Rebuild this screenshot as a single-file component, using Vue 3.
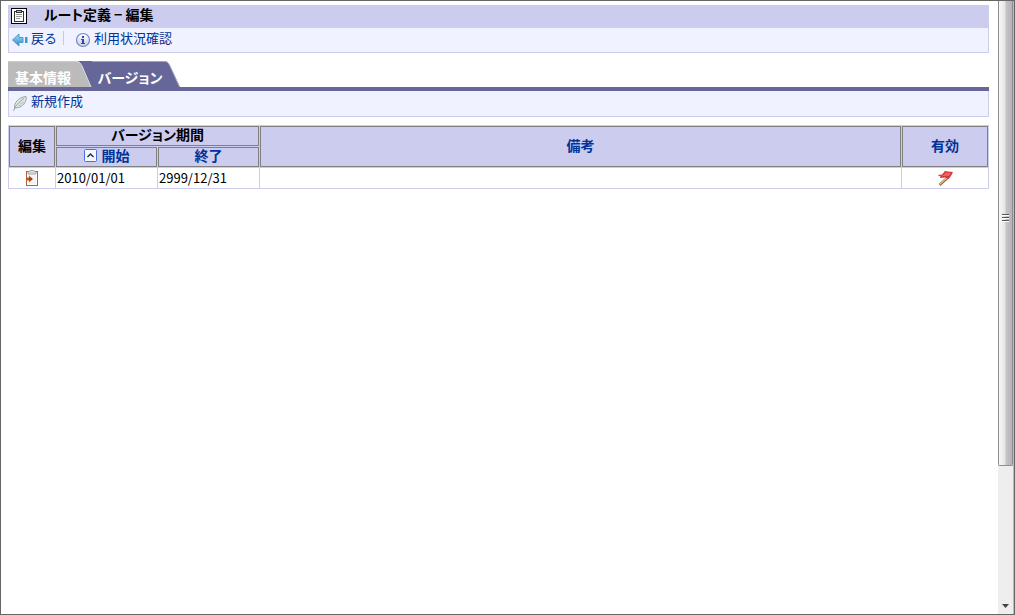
<script setup>
import { ref } from 'vue'

const activeTab = ref('version')
const versions = [{ start: '2010/01/01', end: '2999/12/31', note: '' }]
</script>

<template>
  <div class="window">
    <main class="page">
      <header class="title-bar">
        <svg class="title-icon" width="16" height="16" viewBox="0 0 16 16" shape-rendering="crispEdges" aria-hidden="true">
          <rect x="0.5" y="0.5" width="15" height="15" fill="#fff" stroke="#000" />
          <rect x="3.5" y="3.5" width="9" height="10" fill="#fff" stroke="#333" />
          <rect x="5" y="2" width="6" height="3" fill="#333" />
          <rect x="6" y="3" width="4" height="1" fill="#f2b866" />
          <path d="M5 6.500h6M5 8.500h6M5 10.500h4" stroke="#999" />
        </svg>
        <h1>ルート定義 − 編集</h1>
      </header>
      <nav class="toolbar">
        <a href="#" class="tool">
          <svg width="16" height="16" viewBox="0 0 16 16" aria-hidden="true">
            <defs>
              <linearGradient id="arrow" x1="0" y1="0" x2="0" y2="1">
                <stop offset="0" stop-color="#a5e2fa" />
                <stop offset="1" stop-color="#2a86c8" />
              </linearGradient>
            </defs>
            <path d="M0.500 8L7 2v3.500h4v5H7V14z" fill="url(#arrow)" stroke="#4a9bcc" />
            <path d="M13 5h2.500v6H13z" fill="#3a9bd4" />
          </svg>
          <span>戻る</span>
        </a>
        <span class="divider"></span>
        <a href="#" class="tool">
          <svg width="16" height="16" viewBox="0 0 16 16" aria-hidden="true">
            <defs>
              <linearGradient id="info" x1="0" y1="0" x2="0" y2="1">
                <stop offset="0" stop-color="#fff" />
                <stop offset="1" stop-color="#c9cdd8" />
              </linearGradient>
            </defs>
            <circle cx="8" cy="8" r="6.500" fill="url(#info)" stroke="#6f86cf" stroke-width="1.200" />
            <path d="M7 4h2v2H7zM6 7h3v4h1v1H6v-1h1V8H6z" fill="#2948b8" />
          </svg>
          <span>利用状況確認</span>
        </a>
      </nav>

      <div class="tabs" role="tablist">
        <button class="tab basic" role="tab" :aria-selected="activeTab === 'basic'" @click="activeTab = 'basic'">基本情報</button>
        <svg class="slant" width="16" height="26" viewBox="0 0 16 26" aria-hidden="true">
          <rect width="16" height="26" fill="#666699" />
          <path d="M0 0C4 0 5 3 6 5L15 26H0z" fill="#bbbbbb" />
          <path d="M0 0.500C4 0.500 5 3 6 5L15 26" fill="none" stroke="#dcdce6" />
        </svg>
        <button class="tab version" role="tab" :aria-selected="activeTab === 'version'" @click="activeTab = 'version'">バージョン</button>
        <svg class="slant" width="16" height="26" viewBox="0 0 16 26" aria-hidden="true">
          <path d="M0 0C4 0 5 3 6 5L16 26H0z" fill="#666699" />
          <path d="M0 0.500C4 0.500 5 3 6 5L15.500 26" fill="none" stroke="#a5a5c3" />
        </svg>
      </div>
      <nav class="toolbar version-tools">
        <a href="#" class="tool">
          <svg width="16" height="16" viewBox="0 0 16 16" aria-hidden="true">
            <path d="M2.500 13.500C2 8 6 2.500 14 1.500C15 6 12 10 8 12C6 13 4 12.500 2.500 13.500z" fill="#dfe9e6" stroke="#93a5a3" />
            <path d="M1.500 16C3 11 7 7 12 3.500" fill="none" stroke="#91a3a1" />
            <path d="M6 11L9 9.500M8 9L12 7" fill="none" stroke="#b4c2c0" />
          </svg>
          <span>新規作成</span>
        </a>
      </nav>

      <table>
        <colgroup>
          <col class="col-edit" />
          <col class="col-date" />
          <col class="col-date" />
          <col />
          <col class="col-valid" />
        </colgroup>
        <thead>
          <tr>
            <th rowspan="2">編集</th>
            <th colspan="2">バージョン期間</th>
            <th rowspan="2"><a href="#">備考</a></th>
            <th rowspan="2"><a href="#">有効</a></th>
          </tr>
          <tr>
            <th>
              <a href="#" class="sorted">
                <svg width="13" height="13" viewBox="0 0 13 13" aria-hidden="true">
                  <rect x="0.500" y="0.500" width="12" height="12" rx="1" fill="#f4f8ff" stroke="#4a6fd8" />
                  <path d="M3.500 8L6.500 5L9.500 8" fill="none" stroke="#24344f" stroke-width="1.500" />
                </svg>
                <span>開始</span>
              </a>
            </th>
            <th><a href="#">終了</a></th>
          </tr>
        </thead>
        <tbody>
          <tr v-for="row in versions" :key="row.start">
            <td class="center">
              <button class="icon-button" aria-label="編集">
                <svg width="16" height="16" viewBox="0 0 16 16" aria-hidden="true">
                  <rect x="2.500" y="1.500" width="11" height="14" fill="#fff" stroke="#a8643c" />
                  <rect x="4" y="3" width="8" height="11" fill="#f3f3f3" />
                  <path d="M4 2.500L6 0.500h4L12 2.500V4H4z" fill="#d5d9dc" stroke="#8d9498" stroke-width="0.700" />
                  <path d="M2.500 7.500h2.500V5.500L9 9l-4 3.500v-2h-2.500z" fill="#c4571b" />
                  <path d="M5 9h3" stroke="#6b2a0c" />
                </svg>
              </button>
            </td>
            <td>{{ row.start }}</td>
            <td>{{ row.end }}</td>
            <td>{{ row.note }}</td>
            <td class="center">
              <button class="icon-button" aria-label="有効">
                <svg width="16" height="16" viewBox="0 0 16 16" aria-hidden="true">
                  <path d="M2.500 15L12 6.500" stroke="#94612f" stroke-width="2.600" />
                  <path d="M2.500 14.500L11 7" stroke="#e6ba83" stroke-width="1.200" />
                  <path d="M0.500 5L5 4.500L8 1L11 1.500L16 2L14 6L11.500 9L8 7.500L3 8L3.500 6.500z" fill="#d9363c" />
                  <path d="M3 5.500L6 5L9 2.500L14 3L12 6L7 6z" fill="#ec5f62" />
                </svg>
              </button>
            </td>
          </tr>
        </tbody>
      </table>
    </main>
    <div class="scrollbar" aria-hidden="true">
      <div class="thumb"><i></i><i></i><i></i></div>
      <svg width="7" height="4" viewBox="0 0 7 4"><path d="M0 0h7L3.500 4z" fill="#444" /></svg>
    </div>
  </div>
</template>

<style>
body {
  margin: 0;
}
</style>

<style scoped>
.window {
  box-sizing: border-box;
  display: flex;
  min-height: 100vh;
  border: 1px solid #666;
  background: #fff;
  color: #000;
  font: 13px/20px "Noto Sans CJK JP", sans-serif;
}
.page {
  flex: 1;
  min-width: 0;
  padding: 4px 9px 4px 7px;
}
a {
  color: #003399;
  text-decoration: none;
}
.title-bar {
  display: flex;
  align-items: flex-start;
  gap: 17px;
  height: 23px;
  padding-left: 3px;
  background: #ccccee;
}
.title-icon {
  margin-top: 3px;
}
h1 {
  margin: 0;
  font-size: 14px;
  line-height: 18px;
  font-weight: 700;
  font-feature-settings: "palt";
}
.toolbar {
  box-sizing: border-box;
  display: flex;
  align-items: flex-start;
  height: 25px;
  padding: 0 3px;
  border: 1px solid #ccccee;
  border-top: 0;
  background: #f0f2ff;
}
.tool {
  display: flex;
  gap: 3px;
}
.tool svg {
  margin-top: 4px;
}
.divider {
  width: 1px;
  height: 14px;
  margin: 3px 11px 0 6px;
  background: #ccc;
}
.tabs {
  display: flex;
  margin-top: 8px;
  border-bottom: 4px solid #666699;
}
.tab {
  height: 26px;
  padding: 5px 0 0;
  border: 0;
  border-top: 1px solid #ccc;
  color: #fff;
  font: 700 14px/20px "Noto Sans CJK JP", sans-serif;
  font-feature-settings: "palt";
  white-space: nowrap;
}
.basic {
  width: 68px;
  padding-left: 7px;
  background: #bbb;
  text-align: left;
}
.version {
  width: 72px;
  padding-left: 4px;
  border-color: #a5a5c3;
  background: #666699;
}
.slant {
  display: block;
}
.version-tools {
  height: 26px;
}
table {
  width: 100%;
  margin-top: 8px;
  border: solid #ccccee;
  border-width: 1px 1px 0 0;
  border-spacing: 0;
  table-layout: fixed;
}
.col-edit {
  width: 47px;
}
.col-date {
  width: 102px;
}
.col-valid {
  width: 87px;
}
th,
td {
  box-sizing: border-box;
  height: 21px;
  padding: 0;
  border: solid #ccccee;
  border-width: 0 0 1px 1px;
}
th {
  padding-bottom: 3px;
  background: #ccccee;
  box-shadow: inset 0 0 0 1px #808080;
  font-size: 14px;
  line-height: 17px;
  font-feature-settings: "palt";
}
td {
  padding-left: 1px;
  line-height: 20px;
}
.center {
  padding: 0;
  text-align: center;
}
.sorted {
  display: flex;
  align-items: center;
  justify-content: center;
  gap: 5px;
}
.icon-button {
  display: block;
  margin: 0 auto;
  padding: 0;
  border: 0;
  background: none;
}
.icon-button svg {
  display: block;
}
.scrollbar {
  box-sizing: border-box;
  display: flex;
  flex: none;
  flex-direction: column;
  justify-content: space-between;
  align-items: center;
  width: 16px;
  padding-bottom: 6px;
  border-right: 1px solid #bbb;
  background: #eeeeee;
}
.thumb {
  box-sizing: border-box;
  display: flex;
  flex-direction: column;
  align-items: center;
  justify-content: center;
  gap: 1px;
  width: 100%;
  height: 465px;
  padding-bottom: 30px;
  border: 1px solid #8e8e8e;
  border-top: 0;
  border-radius: 0 0 2px 2px;
  background: linear-gradient(90deg, #f7f7f7, #e6e6e8 45%, #c3c3c8 55%, #b4b4ba);
}
.thumb i {
  width: 7px;
  height: 1px;
  border-bottom: 1px solid #fff;
  background: #555;
}
</style>
